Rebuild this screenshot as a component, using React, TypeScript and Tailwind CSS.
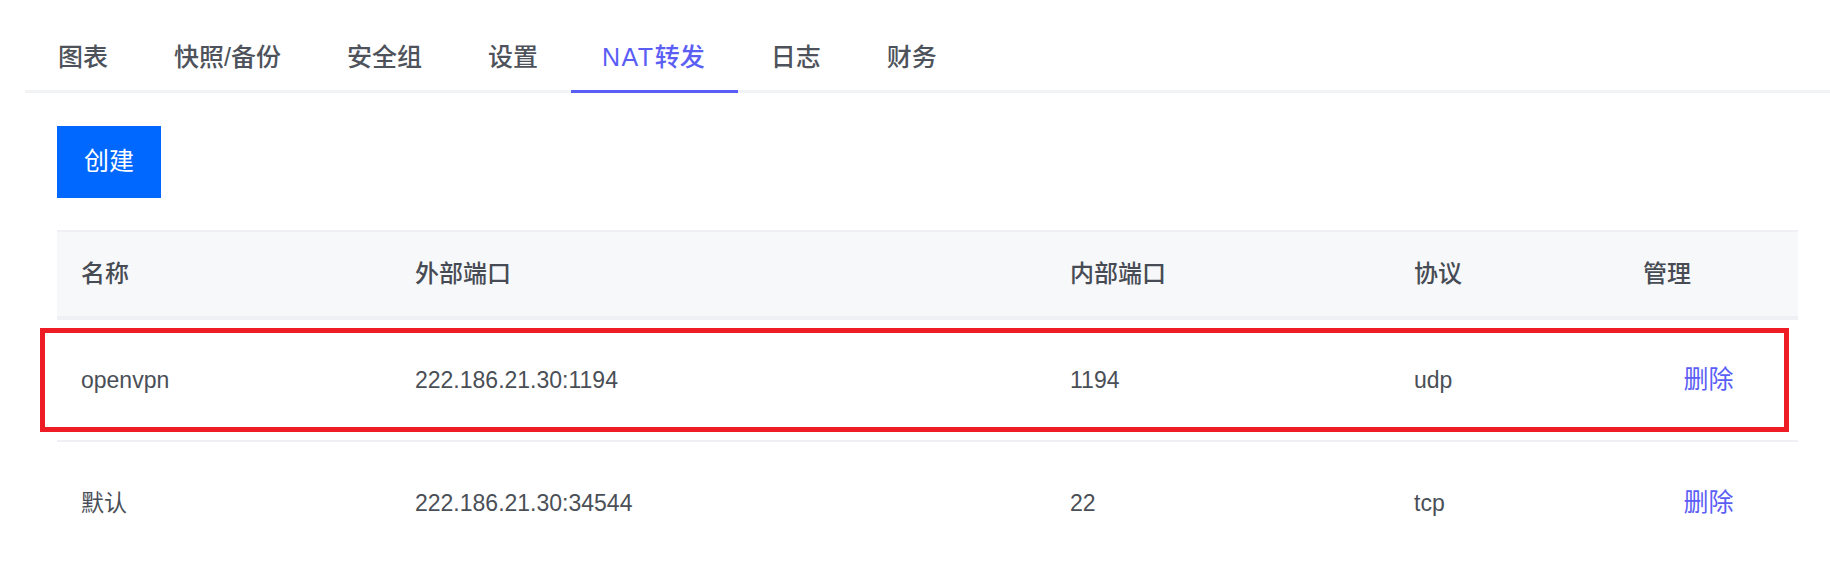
import React from "react";

const tabs = ["图表", "快照/备份", "安全组", "设置", "NAT转发", "日志", "财务"];

const rows = [
  { name: "openvpn", ext: "222.186.21.30:1194", int: "1194", proto: "udp", marked: true },
  { name: "默认", ext: "222.186.21.30:34544", int: "22", proto: "tcp", marked: false },
];

const cols = "grid grid-cols-[334px_655px_344px_229px_1fr]";

const App = () => {
  return (
    <div
      className="w-full h-[566px] bg-white overflow-hidden"
      style={{ fontFamily: '"Liberation Sans", "Noto Sans CJK SC", sans-serif' }}
    >
      {/* tabs */}
      <div className="ml-[25px] flex border-b-[3px] border-[#f2f3f5]">
        {tabs.map((t) => {
          const active = t === "NAT转发";
          return (
            <div
              key={t}
              className={
                active
                  ? "pl-[31px] pr-[33px] pt-[40px] pb-[13px] leading-[34px] text-[25px] font-medium text-[#5b5ef5] border-b-[3px] border-[#5b5ef5] -mb-[3px]"
                  : "px-[33px] pt-[40px] pb-[16px] leading-[34px] text-[25px] font-medium text-[#4e535b]"
              }
            >
              {active ? (
                <>
                  <span className="tracking-[1.5px]">NAT</span>转发
                </>
              ) : (
                t
              )}
            </div>
          );
        })}
      </div>

      <div className="pl-[57px] pr-[32px]">
        <button className="mt-[33px] w-[104px] h-[72px] bg-[#0068ff] text-white text-[25px] flex items-center justify-center">
          创建
        </button>

        {/* table */}
        <div className="mt-[32px]">
          <div
            className={`${cols} h-[90px] bg-[#f7f8fa] border-t-2 border-b-4 border-[#eef0f4] items-center text-[24px] font-medium text-[#474c54]`}
          >
            <div className="pl-[24px]">名称</div>
            <div className="pl-[24px]">外部端口</div>
            <div className="pl-[24px]">内部端口</div>
            <div className="pl-[24px]">协议</div>
            <div className="pl-[24px]">管理</div>
          </div>

          {rows.map((r, i) => (
            <div
              key={r.name}
              className={`${cols} relative h-[122px] items-center text-[23px] text-[#4a4f57] ${
                i < rows.length - 1 ? "border-b-2 border-[#eef0f4]" : ""
              }`}
            >
              <div className="pl-[24px]">{r.name}</div>
              <div className="pl-[24px]">{r.ext}</div>
              <div className="pl-[24px]">{r.int}</div>
              <div className="pl-[24px]">{r.proto}</div>
              <div className="text-center text-[25px] text-[#5b5ef5] cursor-pointer">删除</div>
              {r.marked && (
                <div className="absolute left-[-17px] right-[9px] top-[8px] h-[104px] border-[5px] border-[#ee1d25] pointer-events-none" />
              )}
            </div>
          ))}
        </div>
      </div>
    </div>
  );
};

export default App;
